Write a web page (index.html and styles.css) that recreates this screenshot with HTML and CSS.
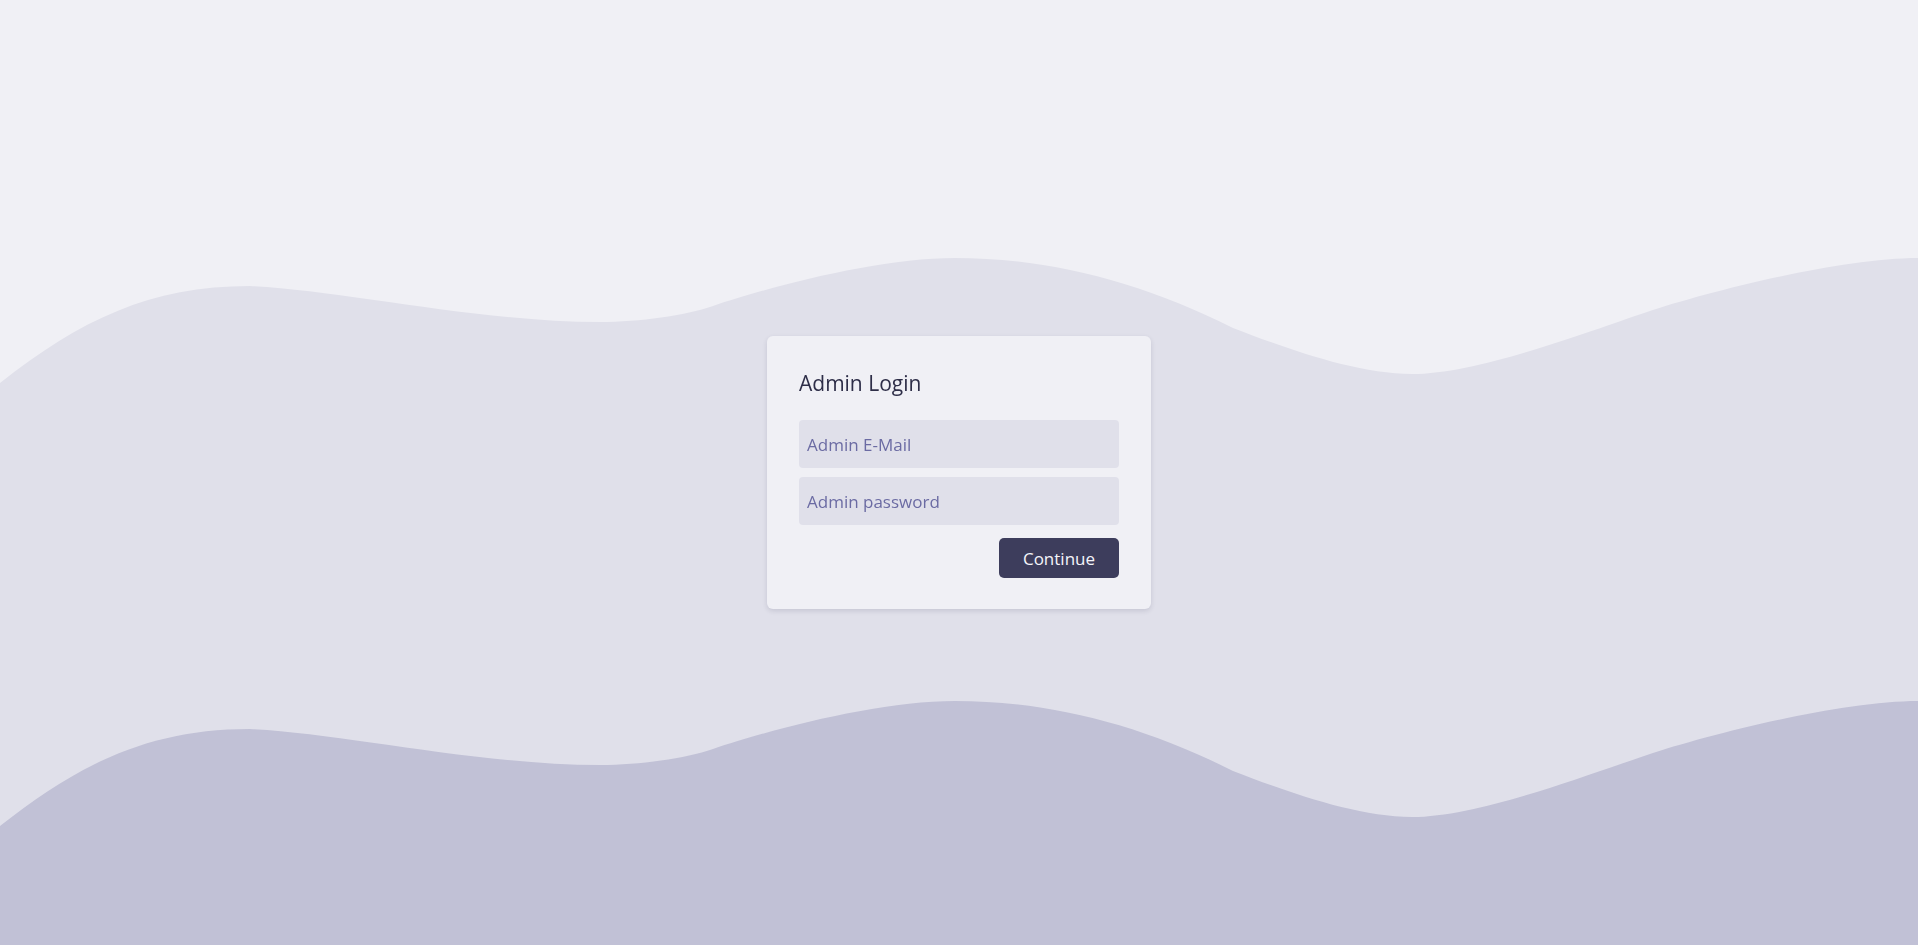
FILE: index.html
```html
<!DOCTYPE html>
<html lang="en">
<head>
<meta charset="utf-8">
<title>Admin Login</title>
<link rel="stylesheet" href="styles.css">
</head>
<body>
<svg class="waves" viewBox="0 0 1918 945" preserveAspectRatio="none" aria-hidden="true">
  <defs>
    <path id="wave" d="M0,383 C80,320 150,286 250,286 C340,290 480,322 600,322 C640,322 685,315.5 713,306 C773,285.6 880,258 955,258 C1047.7,258 1140.3,281.3 1233,328 C1285,348 1355,374 1412,374 C1478,374 1590,331 1647,312 C1707,292 1840,258 1918,258 L1918,945 L0,945 Z"/>
  </defs>
  <use href="#wave" class="wave-back"/>
  <use href="#wave" class="wave-front" transform="translate(0,443)"/>
</svg>
<main class="page">
  <form class="card">
    <h1 class="card-title">Admin Login</h1>
    <input class="field" type="email" placeholder="Admin E-Mail">
    <input class="field field-second" type="password" placeholder="Admin password">
    <div class="actions">
      <button class="btn" type="button">Continue</button>
    </div>
  </form>
</main>
</body>
</html>
```
FILE: styles.css
```css
* { box-sizing: border-box; }
html, body { margin: 0; height: 100%; }
body {
  background: #f0f0f5;
  font-family: "Open Sans", "Liberation Sans", sans-serif;
  overflow: hidden;
}
.waves {
  position: fixed;
  inset: 0;
  width: 100%;
  height: 100%;
  z-index: 0;
}
.wave-back { fill: #e0e0ea; }
.wave-front { fill: #c1c1d6; }
.page {
  position: relative;
  z-index: 1;
  min-height: 100vh;
  display: flex;
  align-items: center;
  justify-content: center;
}
.card {
  width: 384px;
  background: #f0f0f5;
  border-radius: 6px;
  padding: 32px 32px 31px;
  box-shadow: 0 2px 5px rgba(40, 40, 80, 0.14);
  display: flex;
  flex-direction: column;
}
.card-title {
  margin: 0 0 22px;
  font-size: 21px;
  line-height: 30px;
  font-weight: 400;
  color: #2e2e48;
}
.field {
  display: block;
  width: 100%;
  height: 48px;
  border: none;
  border-radius: 4px;
  background: #e0e0ea;
  padding: 0 8px;
  font-family: inherit;
  font-size: 17px;
  color: #3d3d5c;
  outline: none;
}
.field::placeholder { color: #6b6ba3; opacity: 1; }
.field-second { margin-top: 9px; }
.actions {
  margin-top: 13px;
  display: flex;
  justify-content: flex-end;
}
.btn {
  width: 120px;
  height: 40px;
  border: none;
  border-radius: 5px;
  background: #3d3d5c;
  color: #f4f4fa;
  font-family: inherit;
  font-size: 17px;
  cursor: pointer;
}
```
